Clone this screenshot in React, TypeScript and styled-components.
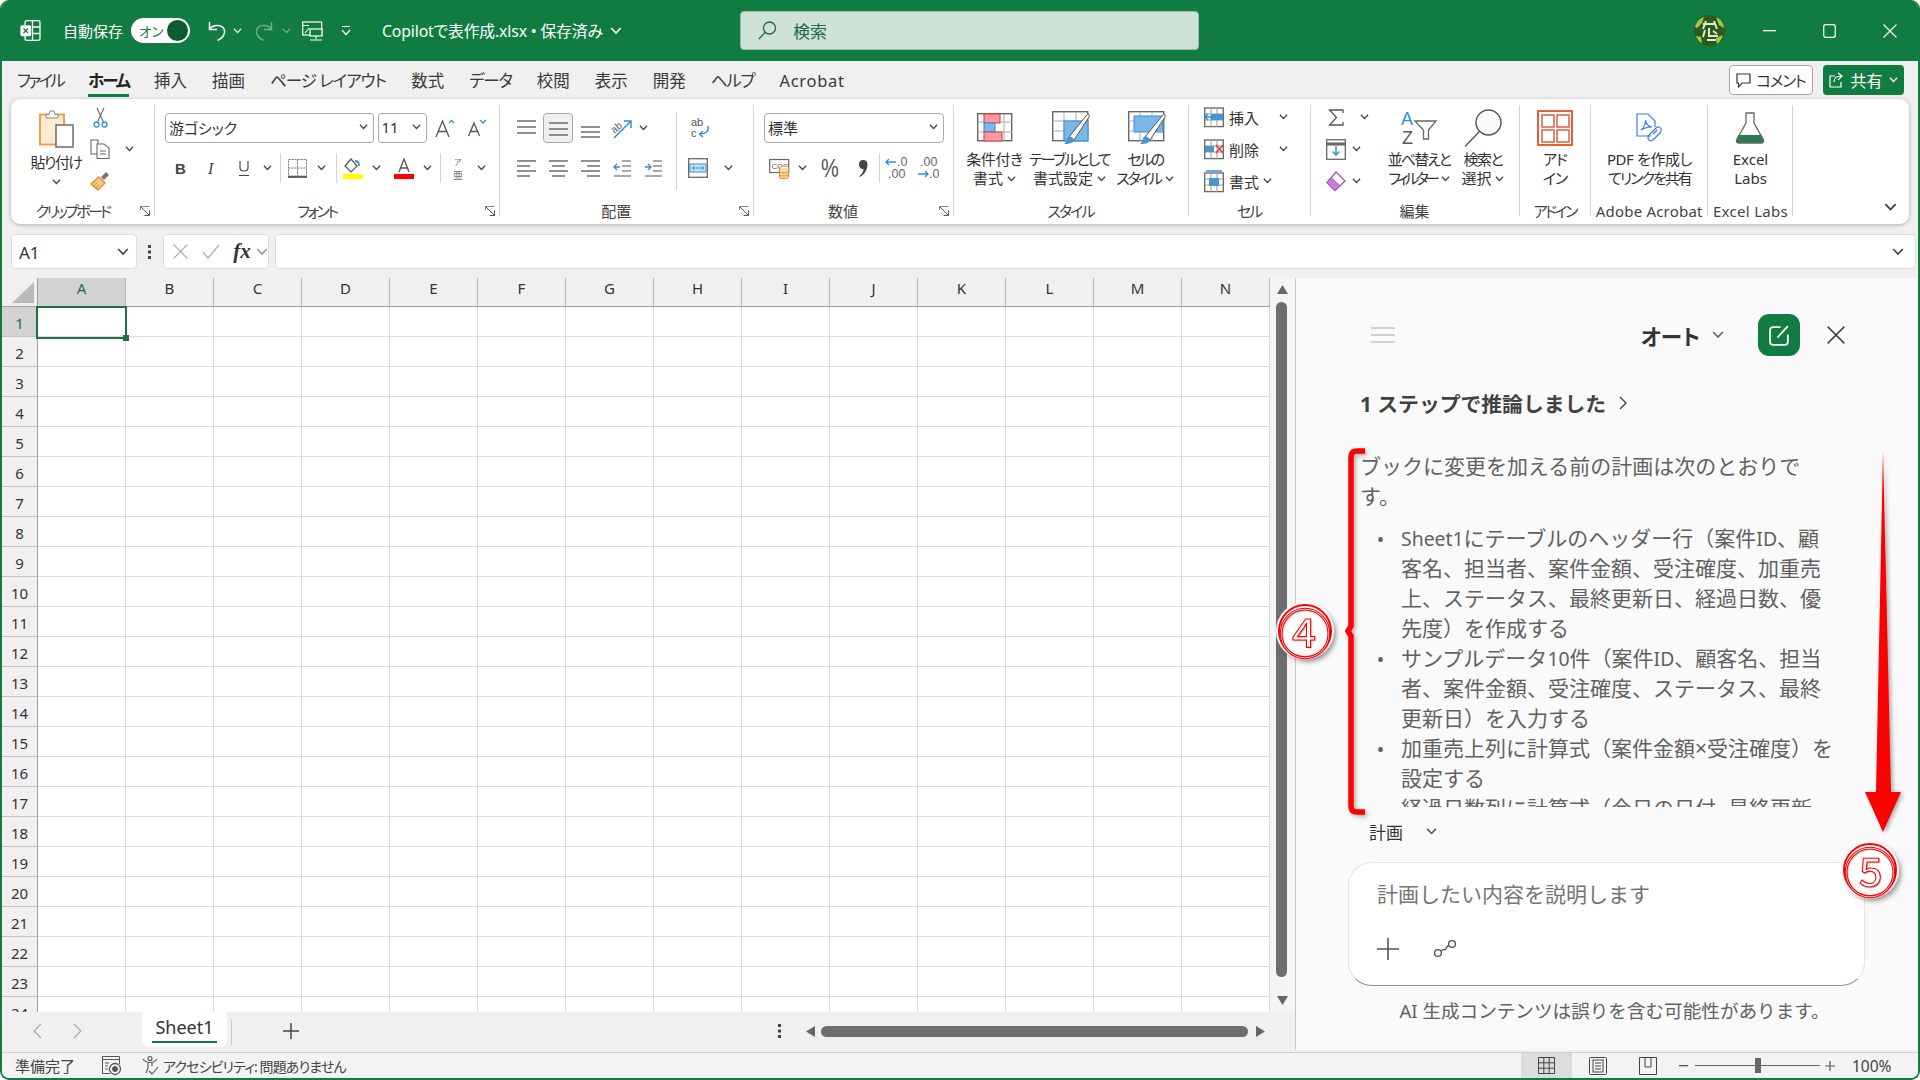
import React from 'react';
import styled, { createGlobalStyle } from 'styled-components';

const GREEN = '#107c41';
const FONT = `"Noto Sans", "Noto Sans CJK JP", sans-serif`;

const GlobalStyle = createGlobalStyle`
  html, body {
    margin: 0;
    background: #fff;
    overflow: hidden;
    font-family: ${FONT};
  }
  * { box-sizing: border-box; }
  svg { overflow: visible; }
`;

const Window = styled.div`
  position: relative;
  width: 1920px;
  height: 1080px;
  display: flex;
  flex-direction: column;
  background: #f0f0f0;
  border: 2px solid ${GREEN};
  border-top: 0;
  border-radius: 9px;
  overflow: hidden;
  color: #333;
  font-feature-settings: 'palt';
`;

/* generic width holder for an icon: icon is centred and may overflow */
const Slot = styled.span<{ $w: number; $ml?: number }>`
  flex: 0 0 ${(p) => p.$w}px;
  width: ${(p) => p.$w}px;
  margin-left: ${(p) => p.$ml ?? 0}px;
  display: flex;
  align-items: center;
  justify-content: center;
  height: 100%;
  & > * { flex-shrink: 0; }
`;

/* ---------- title bar ---------- */
const TitleBar = styled.div`
  height: 61px;
  flex: 0 0 61px;
  margin: 0 -2px;
  padding-left: 12px;
  display: flex;
  align-items: center;
  background: ${GREEN};
  color: #fff;
`;
const AutoSave = styled.span`
  margin-left: 15px;
  font-size: 15px;
  width: 60px;
  white-space: nowrap;
`;
const Toggle = styled.span`
  margin-left: 8px;
  width: 59px;
  height: 25px;
  padding: 0 2px 0 8px;
  border-radius: 13px;
  background: #fff;
  color: ${GREEN};
  font-size: 13.5px;
  display: flex;
  align-items: center;
  justify-content: space-between;
`;
const Knob = styled.span`
  width: 21px;
  height: 21px;
  border-radius: 50%;
  background: #0c5c31;
`;
const FileName = styled.span`
  width: 240px;
  margin-left: 23px;
  display: flex;
  align-items: center;
  gap: 7px;
  font-size: 15.8px;
  letter-spacing: -0.15px;
  white-space: nowrap;
`;
const SearchBox = styled.div`
  margin-left: 118px;
  width: 459px;
  height: 39px;
  padding-left: 17px;
  display: flex;
  align-items: center;
  gap: 16px;
  background: #cfe2d8;
  border: 1px solid #9fb5a9;
  border-radius: 4px;
  color: #1d6b42;
  font-size: 17px;
`;
const TitleRight = styled.div`
  margin-left: auto;
  display: flex;
  align-items: center;
  height: 100%;
`;
const Avatar = styled.span`
  width: 31px;
  height: 31px;
  margin-right: 15px;
  display: flex;
`;

/* ---------- tab row ---------- */
const TabRow = styled.div`
  height: 38px;
  flex: 0 0 38px;
  padding: 0 14px 0 15px;
  display: flex;
  align-items: center;
  gap: 25px;
  font-size: 16.5px;
`;
const Tab = styled.span<{ $active?: boolean; $ls?: number }>`
  position: relative;
  white-space: nowrap;
  letter-spacing: ${(p) => p.$ls ?? 0}px;
  font-weight: ${(p) => (p.$active ? 700 : 400)};
  color: ${(p) => (p.$active ? '#222' : '#3a3a3a')};
  &::after {
    content: '';
    display: ${(p) => (p.$active ? 'block' : 'none')};
    position: absolute;
    left: 0;
    right: 0;
    bottom: -5px;
    height: 3px;
    background: ${GREEN};
  }
`;
const TabRight = styled.div`
  margin-left: auto;
  display: flex;
  gap: 10px;
`;
const CommentButton = styled.span`
  width: 84px;
  height: 30px;
  display: flex;
  align-items: center;
  justify-content: center;
  gap: 5px;
  font-size: 15.5px;
  letter-spacing: -1.2px;
  background: #fff;
  border: 1px solid #a6a6a6;
  border-radius: 4px;
`;
const ShareButton = styled.span`
  width: 81px;
  height: 30px;
  display: flex;
  align-items: center;
  justify-content: center;
  gap: 6px;
  font-size: 16px;
  color: #fff;
  background: ${GREEN};
  border-radius: 4px;
`;

/* ---------- ribbon ---------- */
const Ribbon = styled.div`
  margin: 0 9px 10px;
  height: 125px;
  flex: 0 0 125px;
  display: flex;
  background: #fff;
  border-radius: 9px;
  box-shadow: 0 1px 4px rgba(0, 0, 0, 0.28);
`;
const Group = styled.div<{ $w: number }>`
  position: relative;
  flex: 0 0 ${(p) => p.$w}px;
  width: ${(p) => p.$w}px;
  height: 111px;
  margin-top: 6px;
  border-right: 1px solid #d4d4d4;
  display: flex;
  flex-direction: column;
`;
const GroupBody = styled.div<{ $pl?: number }>`
  flex: 0 0 94px;
  height: 94px;
  padding-left: ${(p) => p.$pl ?? 0}px;
  display: flex;
`;
const GroupLabel = styled.div<{ $ls?: number; $launcher?: boolean }>`
  flex: 0 0 24px;
  height: 24px;
  line-height: 24px;
  padding-right: ${(p) => (p.$launcher ? 20 : 0)}px;
  text-align: center;
  font-size: 15px;
  letter-spacing: ${(p) => p.$ls ?? 0}px;
  white-space: nowrap;
  color: #444;
`;
const Launcher = styled.span`
  position: absolute;
  right: 4px;
  bottom: 0;
  display: flex;
`;
const TwoRows = styled.div<{ $w?: number }>`
  ${(p) => (p.$w ? `width: ${p.$w}px;` : '')}
  padding-top: 8px;
  display: flex;
  flex-direction: column;
  gap: 10px;
`;
const ToolRow = styled.div`
  height: 30px;
  display: flex;
  align-items: center;
`;
const ThreeRows = styled.div`
  margin-top: -4px;
  display: flex;
  flex-direction: column;
`;
const SmallRow = styled.div`
  height: 32px;
  display: flex;
  align-items: center;
  font-size: 15px;
  white-space: nowrap;
`;
const PasteColumn = styled.div`
  width: 64px;
  margin-left: 13px;
  padding-top: 5px;
  display: flex;
  flex-direction: column;
  align-items: center;
  font-size: 15px;
  white-space: nowrap;
`;
const PasteText = styled.span`
  margin-top: 4px;
  line-height: 20px;
  letter-spacing: -1.5px;
`;
const PasteChevron = styled.span`
  display: flex;
  margin-top: 7px;
`;
const SelectBox = styled.span<{ $w: number; $ml?: number }>`
  flex: 0 0 ${(p) => p.$w}px;
  height: 30px;
  margin-left: ${(p) => p.$ml ?? 0}px;
  padding: 0 5px 2px 3px;
  display: flex;
  align-items: center;
  justify-content: space-between;
  font-size: 15px;
  background: #fff;
  border: 1px solid #a8a8a8;
  border-radius: 4px;
`;
const Pressed = styled.span`
  width: 30px;
  height: 30px;
  display: flex;
  align-items: center;
  justify-content: center;
  background: #f0f0f0;
  border: 1px solid #a8a8a8;
  border-radius: 4px;
`;
const ToolSep = styled.span`
  width: 1px;
  height: 30px;
  background: #d4d4d4;
`;
const InnerSep = styled.span`
  width: 1px;
  height: 78px;
  margin-top: 7px;
  background: #d4d4d4;
`;
const BigButton = styled.div<{ $w: number }>`
  flex: 0 0 ${(p) => p.$w}px;
  width: ${(p) => p.$w}px;
  display: flex;
  flex-direction: column;
  align-items: center;
  font-size: 15px;
  line-height: 19px;
  white-space: nowrap;
`;
const BigIcon = styled.span<{ $dx?: number }>`
  height: 45px;
  padding-left: ${(p) => p.$dx ?? 0}px;
  display: flex;
  align-items: center;
  justify-content: center;
`;
const BigLine = styled.span<{ $ls?: number }>`
  display: flex;
  align-items: center;
  gap: 4px;
  letter-spacing: ${(p) => p.$ls ?? 0}px;
`;
const CollapseButton = styled.span`
  margin-left: auto;
  align-self: flex-end;
  width: 38px;
  height: 34px;
  display: flex;
  align-items: center;
  justify-content: center;
`;

/* ---------- formula bar ---------- */
const FormulaBar = styled.div`
  height: 35px;
  flex: 0 0 35px;
  margin: 0 9px 9px;
  display: flex;
  align-items: stretch;
`;
const FormulaCell = styled.div<{ $w?: number }>`
  ${(p) => (p.$w ? `flex: 0 0 ${p.$w}px;` : 'flex: 1;')}
  display: flex;
  align-items: center;
  background: #fff;
  border: 1px solid #dcdcdc;
  border-radius: 4px;
  font-size: 17px;
`;
const NameText = styled.span`
  margin-left: 7px;
  padding-top: 2px;
  flex: 1;
`;
const DotsSlot = styled.span`
  flex: 0 0 26px;
  display: flex;
  align-items: center;
  justify-content: center;
`;
const FxText = styled.span`
  font: italic 700 21px 'Liberation Serif', serif;
  color: #333;
`;

/* ---------- sheet ---------- */
const Main = styled.div`
  flex: 1;
  min-height: 0;
  display: flex;
`;
const SheetPane = styled.div`
  flex: 0 0 1293px;
  display: flex;
  flex-direction: column;
`;
const GridArea = styled.div`
  flex: 1;
  min-height: 0;
  display: flex;
`;
const Grid = styled.div`
  position: relative;
  flex: 0 0 1268px;
  overflow: hidden;
  background: #fff;
  font-size: 15px;
`;
const Row = styled.div<{ $h: number }>`
  height: ${(p) => p.$h}px;
  display: flex;
`;
const Corner = styled.div`
  position: relative;
  flex: 0 0 36px;
  background: #f0f0f0;
  border-bottom: 1px solid #a0a0a0;
  border-right: 1px solid #a0a0a0;
  &::after {
    content: '';
    position: absolute;
    right: 3px;
    bottom: 3px;
    width: 22px;
    height: 21px;
    background: #b9b9b9;
    clip-path: polygon(100% 0, 100% 100%, 0 100%);
  }
`;
const ColHead = styled.div<{ $on?: boolean }>`
  flex: 0 0 88px;
  padding-bottom: 8px;
  display: flex;
  align-items: center;
  justify-content: center;
  background: ${(p) => (p.$on ? '#d2d2d2' : '#f0f0f0')};
  color: ${(p) => (p.$on ? '#1f6f43' : '#333')};
  border-right: 1px solid #b4b4b4;
  border-bottom: 1px solid #a0a0a0;
`;
const RowHead = styled.div<{ $on?: boolean }>`
  flex: 0 0 36px;
  padding-top: 2px;
  display: flex;
  align-items: center;
  justify-content: center;
  background: ${(p) => (p.$on ? '#d2d2d2' : '#f0f0f0')};
  color: ${(p) => (p.$on ? '#1f6f43' : '#333')};
  border-right: 1px solid #a0a0a0;
  border-bottom: 1px solid #c4c4c4;
`;
const Cell = styled.div`
  flex: 0 0 88px;
  border-right: 1px solid #dcdcdc;
  border-bottom: 1px solid #dcdcdc;
`;
const Selection = styled.div`
  position: absolute;
  left: 34px;
  top: 28px;
  width: 91px;
  height: 33px;
  border: 2.5px solid #1f7145;
  &::after {
    content: '';
    position: absolute;
    right: -4px;
    bottom: -4px;
    width: 6px;
    height: 6px;
    background: #1f7145;
  }
`;
const VScroll = styled.div`
  flex: 1;
  padding: 7px 0 5px;
  display: flex;
  flex-direction: column;
  align-items: center;
  background: #f4f4f4;
`;
const VThumb = styled.div`
  width: 11px;
  flex: 1;
  margin: 6px 3px 19px 0;
  border-radius: 6px;
  background: #6d6d6d;
`;
const SheetBar = styled.div`
  height: 40px;
  flex: 0 0 40px;
  display: flex;
  align-items: flex-start;
  background: #f0f0f0;
`;
const SheetTab = styled.div`
  position: relative;
  width: 85px;
  height: 35px;
  padding-bottom: 5px;
  display: flex;
  align-items: center;
  justify-content: center;
  background: #fff;
  border-radius: 0 0 7px 7px;
  font-size: 18px;
  &::after {
    content: '';
    position: absolute;
    left: 10px;
    right: 10px;
    bottom: 4px;
    height: 2px;
    background: ${GREEN};
  }
`;
const NavSlots = styled.div`
  height: 38px;
  display: flex;
  align-items: center;
`;
const TabDivider = styled.span`
  width: 1px;
  height: 26px;
  margin: 7px 0 0 4px;
  background: #c8c8c8;
`;
const HScroll = styled.div`
  margin: 0 21px 0 auto;
  height: 38px;
  display: flex;
  align-items: center;
`;
const HThumb = styled.div`
  width: 427px;
  height: 11px;
  border-radius: 6px;
  background: #6d6d6d;
`;

/* ---------- copilot panel ---------- */
const Panel = styled.div`
  flex: 1;
  height: 772px;
  background: #fafafa;
  border-left: 1px solid #c8c8c8;
  padding-top: 36px;
  display: flex;
  flex-direction: column;
`;
const PanelHead = styled.div`
  height: 42px;
  padding: 0 64px 0 75px;
  display: flex;
  align-items: center;
`;
const ModeLabel = styled.span`
  margin-left: auto;
  font-size: 21.5px;
  font-weight: 700;
  color: #333;
`;
const NewChat = styled.span`
  width: 42px;
  height: 42px;
  margin: 0 0 0 22px;
  border-radius: 11px;
  background: ${GREEN};
  display: flex;
  align-items: center;
  justify-content: center;
`;
const ReasonLine = styled.div`
  margin: 32px 0 33px 64px;
  height: 30px;
  display: flex;
  align-items: center;
  gap: 13px;
  font-size: 20.8px;
  font-weight: 700;
  color: #424242;
  font-feature-settings: normal;
`;
const PlanBody = styled.div`
  margin-left: 64px;
  height: 356px;
  overflow: hidden;
  font-size: 21px;
  line-height: 30px;
  color: #616161;
  white-space: nowrap;
  font-feature-settings: normal;
`;
const Latin = styled.span`
  font-size: 19.4px;
  line-height: 1;
`;
const PlanList = styled.ul`
  margin: 12px 0 0;
  padding: 0;
  list-style: none;
`;
const PlanItem = styled.li`
  display: flex;
`;
const PlanMark = styled.span`
  flex: 0 0 41px;
  padding-top: 2px;
  text-align: center;
  font-size: 20px;
`;
const PlanChip = styled.div`
  margin: 9px 0 16px 73px;
  height: 30px;
  display: flex;
  align-items: center;
  gap: 23px;
  font-size: 17px;
  color: #333;
  font-feature-settings: normal;
`;
const InputBox = styled.div`
  margin-left: 52px;
  width: 517px;
  height: 124px;
  padding: 16px 0 0 28px;
  display: flex;
  flex-direction: column;
  background: #fff;
  border: 1px solid #e4e4e4;
  border-bottom-color: #8f8f8f;
  border-radius: 24px;
  font-feature-settings: normal;
`;
const Placeholder = styled.div`
  height: 30px;
  line-height: 30px;
  font-size: 21px;
  color: #757575;
`;
const InputTools = styled.div`
  margin-top: 25px;
  height: 30px;
  display: flex;
  align-items: center;
  gap: 34px;
`;
const Disclaimer = styled.div`
  margin: 10px 0 0 0;
  padding-left: 15px;
  height: 30px;
  line-height: 30px;
  text-align: center;
  font-size: 18.6px;
  color: #616161;
  font-feature-settings: normal;
`;

/* ---------- status bar ---------- */
const StatusBar = styled.div`
  height: 26px;
  flex: 0 0 26px;
  display: flex;
  align-items: center;
  background: #f3f3f3;
  border-top: 1px solid #cfcfcf;
  font-size: 15px;
  color: #444;
`;
const StatusText = styled.span<{ $ml: number; $size?: number; $ls?: number }>`
  margin-left: ${(p) => p.$ml}px;
  font-size: ${(p) => p.$size ?? 15}px;
  letter-spacing: ${(p) => p.$ls ?? 0}px;
  white-space: nowrap;
`;
const StatusRight = styled.div`
  margin-left: auto;
  height: 100%;
  display: flex;
  align-items: center;
`;
const ViewButton = styled.span<{ $on?: boolean; $w: number }>`
  flex: 0 0 ${(p) => p.$w}px;
  height: 100%;
  display: flex;
  align-items: center;
  justify-content: center;
  background: ${(p) => (p.$on ? '#dcdcdc' : 'transparent')};
`;
const ZoomTrack = styled.span`
  position: relative;
  flex: 0 0 125px;
  height: 1px;
  margin: 0 5px 0 5.5px;
  background: #666;
`;
const ZoomThumb = styled.span`
  position: absolute;
  left: 60px;
  top: -7px;
  width: 6px;
  height: 15px;
  background: #666;
`;
const ZoomPct = styled.span`
  width: 41px;
  margin: 0 25px 0 17px;
  font-size: 15.5px;
  white-space: nowrap;
`;

/* ---------- red annotations drawn over the page ---------- */
const Mark = styled.div<{ $x: number; $y: number }>`
  position: absolute;
  left: ${(p) => p.$x}px;
  top: ${(p) => p.$y}px;
  display: flex;
`;
const CircledDigit = styled.span`
  width: 54px;
  height: 54px;
  display: flex;
  align-items: center;
  justify-content: center;
  border: 2px solid #f00;
  border-radius: 50%;
  background: #fff;
  box-shadow: 0 0 0 2px #fff, 3px 3px 5px 1px rgba(0, 0, 0, 0.4);
  font: 400 53px 'Noto Sans CJK JP', sans-serif;
  line-height: 50px;
  color: #fff;
  -webkit-text-stroke: 1.1px #f00;
  text-shadow: 1px 1px 2px rgba(0, 0, 0, 0.35);
`;

/* ---------- icons ---------- */
const BLUE = '#2f8fd8';
const ORANGE = '#e58a24';

const Chev = ({ c = '#444', w = 9 }: { c?: string; w?: number }) => (
  <svg width={w} height={w * 0.6} viewBox="0 0 10 6" fill="none">
    <path d="M1 .8 5 5 9 .8" stroke={c} strokeWidth="1.4" />
  </svg>
);
const LaunchIcon = () => (
  <svg width="10" height="10" viewBox="0 0 10 10" fill="none" stroke="#555">
    <path d="M.5 4V.5H9.5" stroke="#888" />
    <path d="M.5.5 9 9M4.5 9.5H9.5V4.5" />
  </svg>
);
const ExcelLogo = () => (
  <svg width="21" height="21" viewBox="0 0 21 21" fill="none" stroke="#fff" strokeWidth="1.3">
    <rect x="5" y=".7" width="15" height="19.6" rx="2" />
    <path d="M12.5 1V20M12.5 7H20M12.5 13.5H20" />
    <rect x="1" y="6" width="9.5" height="9.5" rx="1" fill="#fff" />
    <path d="M3.5 8.5 8 13M8 8.5 3.5 13" stroke={GREEN} />
  </svg>
);
const Undo = ({ flip, c }: { flip?: boolean; c: string }) => (
  <svg width="20" height="20" viewBox="0 0 20 20" fill="none" stroke={c} strokeWidth="1.5" style={flip ? { transform: 'scaleX(-1)' } : undefined}>
    <path d="M2.5 1V8.5H10M2.5 8.5C6 3 16 3 17.5 9.5 18.5 13.5 15 17.5 10.5 19.5" />
  </svg>
);
const ScreenIcon = () => (
  <svg width="21" height="21" viewBox="0 0 21 21" fill="none" stroke="#fff" strokeWidth="1.2">
    <rect x=".7" y="2" width="19" height="13" />
    <path d="M.7 5.5H7M14 15v4M8 20H20" />
    <rect x="8" y="9" width="12" height="7" fill={GREEN} />
    <path d="M3 13 7 8" />
  </svg>
);
const CustomizeIcon = () => (
  <svg width="10" height="11" viewBox="0 0 10 11" fill="none" stroke="#fff" strokeWidth="1.2">
    <path d="M1 1.5H9M1 5 5 9.5 9 5" />
  </svg>
);
const SearchIcon = () => (
  <svg width="19" height="19" viewBox="0 0 19 19" fill="none" stroke="#1d6b42" strokeWidth="1.3">
    <circle cx="11.5" cy="7" r="6" />
    <path d="M7 11.5 1 18" />
  </svg>
);
const AvatarIcon = () => (
  <svg width="31" height="31" viewBox="0 0 31 31">
    <circle cx="15.5" cy="15.5" r="15.5" fill="#2c5a1c" />
    <path d="M1 12C3 5 7 3 10 2L8 8 3 13ZM22 2c5 2 8 7 8 11l-5-3ZM2 21l5 1 1 6C5 27 3 24 2 21ZM29 20c-1 4-3 7-6 9l-1-6Z" fill="#a3cc3a" />
    <path d="M9 9h12M12 6l-3 8M20 6l3 8M11 15l-2 7M15 13v8h9M19 16l4 3M13 25h9" stroke="#dfeccb" strokeWidth="2" fill="none" />
  </svg>
);
const MinIcon = () => (
  <svg width="13" height="2"><rect width="13" height="1.3" fill="#fff" /></svg>
);
const MaxIcon = () => (
  <svg width="13" height="14" viewBox="0 0 13 14" fill="none" stroke="#fff" strokeWidth="1.3"><rect x=".7" y=".7" width="11.6" height="12.6" rx="2" /></svg>
);
const CloseIcon = ({ c = '#fff', s = 14 }: { c?: string; s?: number }) => (
  <svg width={s} height={s} viewBox="0 0 14 14" fill="none" stroke={c} strokeWidth="1.2"><path d="M.5.5 13.5 13.5M13.5.5.5 13.5" /></svg>
);
const CommentIcon = () => (
  <svg width="15" height="15" viewBox="0 0 15 15" fill="none" stroke="#333" strokeWidth="1.2"><path d="M1 1H14V10H6L2.5 14V10H1Z" /></svg>
);
const ShareIcon = () => (
  <svg width="15" height="16" viewBox="0 0 15 16" fill="none" stroke="#fff" strokeWidth="1.2"><path d="M6 4H1V15H12V10M5 10C5 6 8 4 12 4M9 1 13 4 9 8" /></svg>
);
const PasteIcon = () => (
  <svg width="35" height="38" viewBox="0 0 35 38">
    <rect x="1" y="4.5" width="24" height="30" fill="#fdebd0" stroke="#eaa14a" strokeWidth="2" />
    <path d="M7 8V4.5H10L11 1H15L16 4.5H19V8Z" fill="#f4f4f4" stroke="#8a8a8a" />
    <rect x="17" y="15" width="17" height="22" fill="#fff" stroke="#6b6b6b" strokeWidth="1.5" />
  </svg>
);
const ScissorsIcon = () => (
  <svg width="15" height="21" viewBox="0 0 15 21" fill="none">
    <path d="M4 1 10.5 15M11 1 4.5 15" stroke="#666" strokeWidth="1.1" />
    <circle cx="3.5" cy="17.5" r="2.5" stroke={BLUE} strokeWidth="1.3" />
    <circle cx="11.5" cy="17.5" r="2.5" stroke={BLUE} strokeWidth="1.3" />
  </svg>
);
const CopyIcon = () => (
  <svg width="20" height="20" viewBox="0 0 20 20" fill="#fff" stroke="#666" strokeWidth="1.1">
    <path d="M1 1H8V15H1Z" />
    <path d="M7 5H14L19 9V19.5H7Z" />
    <path d="M10 12H16M10 15H16" />
  </svg>
);
const BrushIcon = () => (
  <svg width="20" height="20" viewBox="0 0 20 20" fill="none">
    <path d="M1 13 9 6 15 12 8 19Z" fill="#f3c68a" stroke={ORANGE} strokeWidth="1.3" />
    <path d="M4 15 7 12M6 17 9 14" stroke={ORANGE} />
    <path d="M11 6 16 1 19 4 14 9Z" fill="#777" />
  </svg>
);
const FontGrow = ({ down }: { down?: boolean }) => (
  <svg width="20" height="20" viewBox="0 0 20 20" fill="none">
    <path d={down ? 'M1.5 18 7 5 12.5 18M3.5 13.5H10.5' : 'M1 19 7.5 3 14 19M3.5 13.5H11.5'} stroke="#555" strokeWidth="1.3" />
    <path d={down ? 'M13 2 16 5 19 2' : 'M14 5 16.5 2.5 19 5'} stroke={BLUE} strokeWidth="1.3" />
  </svg>
);
const GlyphB = () => (
  <svg width="12" height="20" viewBox="0 0 12 20"><text x="1" y="16" fontFamily="Liberation Sans" fontWeight="700" fontSize="15" fill="#444">B</text></svg>
);
const GlyphI = () => (
  <svg width="10" height="20" viewBox="0 0 10 20"><text x="2" y="16" fontFamily="Liberation Serif" fontStyle="italic" fontSize="16" fill="#444">I</text></svg>
);
const GlyphU = () => (
  <svg width="12" height="17" viewBox="0 0 12 17" fill="none" stroke="#444" strokeWidth="1.2"><path d="M2 1V8C2 12 10 12 10 8V1M1 15.5H11" /></svg>
);
const BorderIcon = () => (
  <svg width="19" height="19" viewBox="0 0 19 19" fill="none" stroke="#777" strokeDasharray="2 1">
    <path d="M.5.5H18.5V17H.5ZM9.5.5V17M.5 9H18.5" />
    <path d="M0 18H19" stroke="#333" strokeWidth="1.5" strokeDasharray="none" />
  </svg>
);
const FillIcon = () => (
  <svg width="20" height="21" viewBox="0 0 20 21" fill="none">
    <path d="M8 1 14 8 8 14 2 8Z" stroke="#555" strokeWidth="1.2" />
    <path d="M12 3C15 3 16 5 16 8" stroke={BLUE} strokeWidth="1.8" />
    <rect x="0" y="16" width="20" height="5" fill="#ffff00" />
  </svg>
);
const FontColorIcon = () => (
  <svg width="20" height="21" viewBox="0 0 20 21" fill="none">
    <path d="M5 14 10 1 15 14M6.5 10H13.5" stroke="#555" strokeWidth="1.3" />
    <rect x="0" y="16" width="20" height="5" fill="#ff0000" />
  </svg>
);
const PhoneticIcon = () => (
  <svg width="12" height="23" viewBox="0 0 12 23">
    <text x="2" y="8" fontSize="8" fill="#777" fontFamily="Noto Sans CJK JP">ア</text>
    <text x="1" y="22" fontSize="10" fill="#777" fontFamily="Noto Sans CJK JP">亜</text>
  </svg>
);
const Lines = ({ rows }: { rows: number[][] }) => (
  <svg width="19" height="19" viewBox="0 0 19 19" stroke="#555" strokeWidth="1.3" fill="none">
    {rows.map(([y, a, b]) => (
      <path key={`${y}-${a}`} d={`M${a} ${y}H${b}`} />
    ))}
  </svg>
);
const OrientIcon = () => (
  <svg width="22" height="22" viewBox="0 0 22 22" fill="none">
    <text x="0" y="12" fontSize="10" fill="#555" fontFamily="Liberation Sans" transform="rotate(-40 8 10)">ab</text>
    <path d="M3 21 19 5M13 4H20V11" stroke={BLUE} strokeWidth="1.5" />
  </svg>
);
const IndentIcon = ({ out }: { out?: boolean }) => (
  <svg width="19" height="19" viewBox="0 0 19 19" fill="none">
    <path d="M9 3H18M9 8H18M9 13H18M1 18H18" stroke="#555" strokeWidth="1.2" transform="translate(0 -1)" />
    <path d={out ? 'M7 8H1M4 5 1 8 4 11' : 'M1 8H7M4 5 7 8 4 11'} stroke={BLUE} strokeWidth="1.4" />
  </svg>
);
const WrapIcon = () => (
  <svg width="19" height="22" viewBox="0 0 19 22" fill="none">
    <text x="0" y="9" fontSize="11" fill="#555" fontFamily="Liberation Sans">ab</text>
    <text x="0" y="20" fontSize="11" fill="#555" fontFamily="Liberation Sans">c</text>
    <path d="M17 9C18 14 15 17 9 17M12 14 8.5 17 12 20" stroke={BLUE} strokeWidth="1.4" />
  </svg>
);
const MergeIcon = () => (
  <svg width="20" height="20" viewBox="0 0 20 20" fill="none">
    <rect x=".7" y=".7" width="18.6" height="18.6" stroke="#666" strokeWidth="1.3" />
    <rect x="2" y="6" width="16" height="8" fill="#cfe6f7" stroke={BLUE} />
    <path d="M4 10H16M6.5 8 4 10 6.5 12M13.5 8 16 10 13.5 12" stroke={BLUE} />
  </svg>
);
const AccountingIcon = () => (
  <svg width="21" height="21" viewBox="0 0 21 21" fill="none">
    <rect x=".7" y="1.5" width="19" height="13" stroke="#666" strokeWidth="1.2" />
    <text x="2.5" y="11" fontSize="8" fill="#666" fontFamily="Liberation Sans">CCC</text>
    <ellipse cx="15" cy="10" rx="4.5" ry="2" fill="#fff" stroke={ORANGE} />
    <path d="M10.5 10V19C10.5 21.5 19.5 21.5 19.5 19V10M10.5 13.5C11 15.5 19 15.5 19.5 13.5M10.5 16.5C11 18.5 19 18.5 19.5 16.5" fill="#fbd9ae" stroke={ORANGE} />
  </svg>
);
const PercentIcon = () => (
  <svg width="20" height="20" viewBox="0 0 20 20"><text x="0" y="0" fontSize="25" fontFamily="Liberation Sans" fill="#555" transform="translate(1 19) scale(.8 1)">%</text></svg>
);
const CommaIcon = () => (
  <svg width="10" height="20" viewBox="0 0 10 20"><path d="M5 2C8 2 9.5 4 9.5 6.5 9.5 12 6 17 2 19L1.5 18C4 16 5.5 13.5 5.5 11 3 11.5 1 9.5 1 6.5 1 4 2.5 2 5 2Z" fill="#444" /></svg>
);
const DecimalIcon = ({ more }: { more?: boolean }) => (
  <svg width="22" height="24" viewBox="0 0 22 24" fill="none">
    <text x={more ? 12 : 3} y="10" fontSize="12.5" fill="#666" fontFamily="Liberation Sans">{more ? '.0' : '.00'}</text>
    <text x={more ? 3 : 12} y="22" fontSize="12.5" fill="#666" fontFamily="Liberation Sans">{more ? '.00' : '.0'}</text>
    <path d={more ? 'M11 6H1M4 3 1 6 4 9' : 'M1 18H11M8 15 11 18 8 21'} stroke={BLUE} strokeWidth="1.3" />
  </svg>
);
const CondFormatIcon = () => (
  <svg width="36" height="29" viewBox="0 0 36 29" fill="none">
    <rect x=".7" y=".7" width="34" height="27" fill="#fff" stroke="#666" strokeWidth="1.4" />
    <path d="M8 1V28M27 1V28M.7 9H35M.7 19H35" stroke="#aaa" />
    <rect x="7" y="1" width="16" height="9" fill="#ff9aa2" stroke="#d9363e" />
    <rect x="7" y="10" width="11" height="9" fill="#7db7e8" stroke={BLUE} />
    <rect x="7" y="19" width="18" height="9" fill="#ff9aa2" stroke="#d9363e" />
  </svg>
);
const TableBrushIcon = ({ solid }: { solid?: boolean }) => (
  <svg width="39" height="34" viewBox="0 0 39 34" fill="none">
    <rect x=".7" y=".7" width="35" height="29" fill="#fff" stroke="#666" strokeWidth="1.4" />
    <path d="M12 1V30M24 1V30M.7 10H36M.7 20H36" stroke="#aaa" />
    {solid ? (
      <rect x="6" y="5" width="29" height="16" fill="#7db7e8" stroke={BLUE} />
    ) : (
      <rect x="12" y="10" width="24" height="20" fill="#7db7e8" stroke={BLUE} />
    )}
    <path d="M17 26 34 5C36 2 38 3 37 6L22 29Z" fill="#fff" stroke="#555" />
    <path d="M12 33C15 33 21 33 22 29 21 26 17 24 16 26 14 28 15 31 12 33Z" fill="#4a94cf" />
  </svg>
);
const InsertIcon = () => (
  <svg width="20" height="21" viewBox="0 0 20 21" fill="none">
    <rect x=".7" y="1" width="18.6" height="18.6" stroke="#666" strokeWidth="1.3" />
    <path d="M7 1V20M13 1V20M1 7H19M1 13H19" stroke="#999" />
    <rect x="7" y="7" width="12" height="6" fill="#4a94cf" />
    <path d="M9 10H1M4 7 1 10 4 13" stroke={BLUE} strokeWidth="1.5" />
  </svg>
);
const DeleteIcon = () => (
  <svg width="20" height="21" viewBox="0 0 20 21" fill="none">
    <rect x=".7" y="1" width="18.6" height="18.6" stroke="#666" strokeWidth="1.3" />
    <path d="M7 1V20M13 1V20M1 7H19M1 13H19" stroke="#999" />
    <rect x="1" y="7" width="9" height="6" fill="#4a94cf" />
    <path d="M12 6 19 14M19 6 12 14" stroke="#e03c3c" strokeWidth="1.5" />
  </svg>
);
const FormatIcon = () => (
  <svg width="20" height="22" viewBox="0 0 20 22" fill="none">
    <rect x=".7" y="3" width="18.6" height="18.6" stroke="#666" strokeWidth="1.3" />
    <path d="M7 3V22M13 3V22M1 9H19M1 15H19" stroke="#999" />
    <rect x="5" y="8" width="10" height="8" fill="#4a94cf" />
    <path d="M2 1H18" stroke={BLUE} strokeWidth="1.5" />
  </svg>
);
const SumIcon = () => (
  <svg width="16" height="17" viewBox="0 0 16 17" fill="none" stroke="#555" strokeWidth="1.3"><path d="M15 4V1H1.5L8.5 8.5 1.5 16H15V13" /></svg>
);
const FillDownIcon = () => (
  <svg width="20" height="21" viewBox="0 0 20 21" fill="none">
    <rect x=".7" y=".7" width="18.6" height="19.6" stroke="#666" strokeWidth="1.3" />
    <path d="M1 5H19" stroke="#666" strokeWidth="3" />
    <path d="M10 7V16M6.5 12.5 10 16 13.5 12.5" stroke={BLUE} strokeWidth="1.5" />
  </svg>
);
const EraserIcon = () => (
  <svg width="20" height="20" viewBox="0 0 20 20" fill="none">
    <path d="M10 1 19 10 9 19.5 1 11.5Z" fill="#fff" stroke="#a94fbf" strokeWidth="1.3" />
    <path d="M5.5 7 14 15 9 19.5 1 11.5Z" fill="#c77fd8" stroke="#a94fbf" />
  </svg>
);
const SortIcon = () => (
  <svg width="37" height="34" viewBox="0 0 37 34" fill="none">
    <text x="1" y="14" fontSize="18" fill={BLUE} fontFamily="Liberation Sans">A</text>
    <text x="2" y="33" fontSize="18" fill="#555" fontFamily="Liberation Sans">Z</text>
    <path d="M15 10H36L28.5 19V28H23.5V19Z" fill="#fff" stroke="#666" strokeWidth="1.3" />
  </svg>
);
const FindIcon = () => (
  <svg width="38" height="38" viewBox="0 0 38 38" fill="none" stroke="#555" strokeWidth="1.4">
    <circle cx="24.5" cy="13.5" r="12.5" fill="#fafafa" />
    <path d="M15.5 22.5 1 37.5" />
  </svg>
);
const AddinIcon = () => (
  <svg width="36" height="36" viewBox="0 0 36 36" fill="none" stroke="#e0603a" strokeWidth="1.5">
    <rect x="1" y="1" width="34" height="34" strokeWidth="2" />
    <rect x="5" y="5" width="12" height="12" />
    <rect x="20" y="5" width="12" height="12" />
    <rect x="5" y="20" width="12" height="12" />
    <rect x="20" y="20" width="12" height="12" />
  </svg>
);
const PdfLinkIcon = () => (
  <svg width="27" height="29" viewBox="0 0 27 29" fill="none" stroke="#3a7fe0" strokeWidth="1.2">
    <path d="M15 23H1V1H12L19 8V14" />
    <path d="M5 17C8 15 10 10 9.5 7 10 11 13 14 16 14 12 14 8 15 5 17Z" />
    <path d="M13 27C11 25 12 23 14 21L20 15C22 13 25 14 25 16 26 18 24 20 22 22L18 26C16 28 14 28 13 27ZM17 21 21 17" />
  </svg>
);
const FlaskIcon = () => (
  <svg width="30" height="32" viewBox="0 0 30 32" fill="none">
    <path d="M3.5 23H26.5L28.5 28C29 30 28 31 26 31H4C2 31 1 30 1.5 28Z" fill="#2c7a50" />
    <path d="M11 1V11L1.5 28C1 30 2 31 4 31H26C28 31 29 30 28.5 28L19 11V1ZM11 1H19" stroke="#666" strokeWidth="1.3" />
  </svg>
);
const Dots = () => (
  <svg width="4" height="14" viewBox="0 0 4 14" fill="#444"><rect y="0" width="3" height="3" /><rect y="5.5" width="3" height="3" /><rect y="11" width="3" height="3" /></svg>
);
const Tri = ({ d, c = '#666' }: { d: 'u' | 'd' | 'l' | 'r'; c?: string }) => {
  const p = { u: 'M0 9H11L5.5 0Z', d: 'M0 0H11L5.5 9Z', l: 'M9 0V11L0 5.5Z', r: 'M0 0V11L9 5.5Z' }[d];
  return <svg width="11" height="11" viewBox="0 0 11 11"><path d={p} fill={c} /></svg>;
};
const Nav = ({ right }: { right?: boolean }) => (
  <svg width="9" height="16" viewBox="0 0 9 16" fill="none" stroke="#aaa" strokeWidth="1.2"><path d={right ? 'M1 1 8 8 1 15' : 'M8 1 1 8 8 15'} /></svg>
);
const Plus = ({ s = 16, c = '#444', w = 1.5 }: { s?: number; c?: string; w?: number }) => (
  <svg width={s} height={s} viewBox={`0 0 ${s} ${s}`} fill="none" stroke={c} strokeWidth={w}><path d={`M${s / 2} 0V${s}M0 ${s / 2}H${s}`} /></svg>
);
const MacroIcon = () => (
  <svg width="19" height="19" viewBox="0 0 19 19" fill="none" stroke="#555">
    <path d="M.5.5H17.5M.5 3.5H17.5M.5.5V17.5H8M17.5.5V8M3 7H7M3 10H6M3 13H6" />
    <circle cx="13" cy="13" r="5.5" fill="#f3f3f3" strokeWidth="1.3" />
    <circle cx="13" cy="13" r="2.5" fill="#555" />
  </svg>
);
const AccessIcon = () => (
  <svg width="17" height="19" viewBox="0 0 17 19" fill="none" stroke="#555" strokeWidth="1.1">
    <circle cx="8" cy="2.5" r="2" />
    <path d="M1 3C3 6 6 6.5 8 6.5S13 6 15 3M6 7V12L4 17M10 7V10M7 15 10 18 16 11" />
  </svg>
);
const NormalViewIcon = () => (
  <svg width="17" height="17" viewBox="0 0 17 17" fill="none" stroke="#444"><path d="M.5.5H16.5V16.5H.5ZM5.8.5V16.5M11.2.5V16.5M.5 5.8H16.5M.5 11.2H16.5" /></svg>
);
const PageViewIcon = () => (
  <svg width="18" height="18" viewBox="0 0 18 18" fill="none" stroke="#444"><rect x=".5" y=".5" width="17" height="17" rx="1" /><rect x="4" y="3" width="10" height="12" /><path d="M6 6H12M6 9H12M6 12H12" /></svg>
);
const BreakViewIcon = () => (
  <svg width="18" height="18" viewBox="0 0 18 18" fill="none" stroke="#444"><path d="M.5.5V17.5H17.5V.5ZM6 .5V10H12V.5" /></svg>
);
const BurgerIcon = () => (
  <svg width="24" height="16" viewBox="0 0 24 16" stroke="#c4c4c4" strokeWidth="1.3"><path d="M0 1H24M0 8H24M0 15H24" /></svg>
);
const ComposeIcon = () => (
  <svg width="23" height="23" viewBox="0 0 22 22" fill="none" stroke="#fff" strokeWidth="1.7">
    <path d="M12 3H5C3 3 2 4 2 6V17C2 19 3 20 5 20H16C18 20 19 19 19 17V10" />
    <path d="M9 13 19 2" />
  </svg>
);
const LinkIcon = () => (
  <svg width="24" height="20" viewBox="0 0 24 20" fill="none" stroke="#555" strokeWidth="1.4">
    <circle cx="5" cy="14" r="3.4" />
    <circle cx="19" cy="5" r="3.4" />
    <path d="M8 12C11 9 11 12 13 10 14 8 14 7 16 6" />
  </svg>
);

/* ---------- page ---------- */
const tabs: { label: string; ls?: number }[] = [
  { label: 'ファイル', ls: -2.8 },
  { label: 'ホーム', ls: -2 },
  { label: '挿入' },
  { label: '描画' },
  { label: 'ページ レイアウト', ls: -1 },
  { label: '数式' },
  { label: 'データ', ls: -1.2 },
  { label: '校閲' },
  { label: '表示' },
  { label: '開発' },
  { label: 'ヘルプ', ls: -1.2 },
  { label: 'Acrobat', ls: 0.7 },
];
const columns = 'ABCDEFGHIJKLMN'.split('');
const rows = Array.from({ length: 24 }, (_, i) => i + 1);

const App: React.FC = () => (
  <>
    <GlobalStyle />
    <Window>
      <TitleBar>
        <Slot $w={36}><ExcelLogo /></Slot>
        <AutoSave>自動保存</AutoSave>
        <Toggle>オン<Knob /></Toggle>
        <Slot $w={21} $ml={16}><Undo c="#fff" /></Slot>
        <Slot $w={20}><Chev c="#d5e6dc" /></Slot>
        <Slot $w={34}><Undo flip c="#6fb08c" /></Slot>
        <Slot $w={10}><Chev c="#6fb08c" /></Slot>
        <Slot $w={42}><ScreenIcon /></Slot>
        <Slot $w={26}><CustomizeIcon /></Slot>
        <FileName>Copilotで表作成.xlsx • 保存済み<Chev c="#fff" w={12} /></FileName>
        <SearchBox><SearchIcon />検索</SearchBox>
        <TitleRight>
          <Avatar><AvatarIcon /></Avatar>
          <Slot $w={58}><MinIcon /></Slot>
          <Slot $w={62}><MaxIcon /></Slot>
          <Slot $w={60}><CloseIcon /></Slot>
        </TitleRight>
      </TitleBar>

      <TabRow>
        {tabs.map((t) => (
          <Tab key={t.label} $active={t.label === 'ホーム'} $ls={t.ls}>{t.label}</Tab>
        ))}
        <TabRight>
          <CommentButton><CommentIcon />コメント</CommentButton>
          <ShareButton><ShareIcon />共有<Chev c="#fff" /></ShareButton>
        </TabRight>
      </TabRow>

      <Ribbon>
        <Group $w={144}>
          <GroupBody>
            <PasteColumn>
              <PasteIcon />
              <PasteText>貼り付け</PasteText>
              <PasteChevron><Chev /></PasteChevron>
            </PasteColumn>
            <ThreeRows>
              <SmallRow><Slot $w={24}><ScissorsIcon /></Slot></SmallRow>
              <SmallRow><Slot $w={24}><CopyIcon /></Slot><Slot $w={34}><Chev /></Slot></SmallRow>
              <SmallRow><Slot $w={24}><BrushIcon /></Slot></SmallRow>
            </ThreeRows>
          </GroupBody>
          <GroupLabel $launcher $ls={-2.7}>クリップボード</GroupLabel>
          <Launcher><LaunchIcon /></Launcher>
        </Group>

        <Group $w={345}>
          <GroupBody $pl={10}>
            <TwoRows>
              <ToolRow>
                <SelectBox $w={209}>游ゴシック<Chev /></SelectBox>
                <SelectBox $w={49} $ml={3.5}>11<Chev /></SelectBox>
                <Slot $w={37}><FontGrow /></Slot>
                <Slot $w={27}><FontGrow down /></Slot>
              </ToolRow>
              <ToolRow>
                <Slot $w={30}><GlyphB /></Slot>
                <Slot $w={32}><GlyphI /></Slot>
                <Slot $w={34}><GlyphU /></Slot>
                <Slot $w={12}><Chev /></Slot>
                <Slot $w={14}><ToolSep /></Slot>
                <Slot $w={20}><BorderIcon /></Slot>
                <Slot $w={28}><Chev /></Slot>
                <Slot $w={2}><ToolSep /></Slot>
                <Slot $w={32}><FillIcon /></Slot>
                <Slot $w={15}><Chev /></Slot>
                <Slot $w={40}><FontColorIcon /></Slot>
                <Slot $w={6}><Chev /></Slot>
                <Slot $w={21}><ToolSep /></Slot>
                <Slot $w={14}><PhoneticIcon /></Slot>
                <Slot $w={32}><Chev /></Slot>
              </ToolRow>
            </TwoRows>
          </GroupBody>
          <GroupLabel $launcher $ls={-2.5}>フォント</GroupLabel>
          <Launcher><LaunchIcon /></Launcher>
        </Group>

        <Group $w={253.5}>
          <GroupBody $pl={10}>
            <TwoRows $w={166}>
              <ToolRow>
                <Slot $w={32}><Lines rows={[[2, 0, 19], [8, 0, 19], [14, 0, 19]]} /></Slot>
                <Slot $w={32}><Pressed><Lines rows={[[4, 0, 19], [10, 0, 19], [16, 0, 19]]} /></Pressed></Slot>
                <Slot $w={32}><Lines rows={[[8, 0, 19], [13, 0, 19], [18, 0, 19]]} /></Slot>
                <Slot $w={32}><OrientIcon /></Slot>
                <Slot $w={10}><Chev /></Slot>
              </ToolRow>
              <ToolRow>
                <Slot $w={32}><Lines rows={[[2, 0, 19], [7, 0, 13], [12, 0, 19], [17, 0, 13]]} /></Slot>
                <Slot $w={32}><Lines rows={[[2, 0, 19], [7, 3, 16], [12, 0, 19], [17, 3, 16]]} /></Slot>
                <Slot $w={32}><Lines rows={[[2, 0, 19], [7, 6, 19], [12, 0, 19], [17, 6, 19]]} /></Slot>
                <Slot $w={32}><IndentIcon out /></Slot>
                <Slot $w={31}><IndentIcon /></Slot>
              </ToolRow>
            </TwoRows>
            <InnerSep />
            <TwoRows>
              <ToolRow><Slot $w={46}><WrapIcon /></Slot></ToolRow>
              <ToolRow>
                <Slot $w={42}><MergeIcon /></Slot>
                <Slot $w={18}><Chev /></Slot>
              </ToolRow>
            </TwoRows>
          </GroupBody>
          <GroupLabel $launcher>配置</GroupLabel>
          <Launcher><LaunchIcon /></Launcher>
        </Group>

        <Group $w={200}>
          <GroupBody $pl={10.5}>
            <TwoRows>
              <ToolRow><SelectBox $w={180}>標準<Chev /></SelectBox></ToolRow>
              <ToolRow>
                <Slot $w={30}><AccountingIcon /></Slot>
                <Slot $w={17}><Chev /></Slot>
                <Slot $w={38}><PercentIcon /></Slot>
                <Slot $w={27}><CommaIcon /></Slot>
                <Slot $w={7}><ToolSep /></Slot>
                <Slot $w={26}><DecimalIcon more /></Slot>
                <Slot $w={38}><DecimalIcon /></Slot>
              </ToolRow>
            </TwoRows>
          </GroupBody>
          <GroupLabel $launcher>数値</GroupLabel>
          <Launcher><LaunchIcon /></Launcher>
        </Group>

        <Group $w={235}>
          <GroupBody $pl={3.5}>
            <BigButton $w={75}>
              <BigIcon><CondFormatIcon /></BigIcon>
              <BigLine $ls={-0.4}>条件付き</BigLine>
              <BigLine>書式<Chev /></BigLine>
            </BigButton>
            <BigButton $w={75}>
              <BigIcon $dx={3}><TableBrushIcon /></BigIcon>
              <BigLine $ls={-1.9}>テーブルとして</BigLine>
              <BigLine>書式設定<Chev /></BigLine>
            </BigButton>
            <BigButton $w={76}>
              <BigIcon $dx={5}><TableBrushIcon solid /></BigIcon>
              <BigLine $ls={-2.5}>セルの</BigLine>
              <BigLine $ls={-2.4}>スタイル<Chev /></BigLine>
            </BigButton>
          </GroupBody>
          <GroupLabel $ls={-2}>スタイル</GroupLabel>
        </Group>

        <Group $w={122}>
          <GroupBody $pl={10.4}>
            <ThreeRows>
              <SmallRow><Slot $w={30}><InsertIcon /></Slot>挿入<Slot $w={50}><Chev /></Slot></SmallRow>
              <SmallRow><Slot $w={30}><DeleteIcon /></Slot>削除<Slot $w={50}><Chev /></Slot></SmallRow>
              <SmallRow><Slot $w={30}><FormatIcon /></Slot>書式<Slot $w={17}><Chev /></Slot></SmallRow>
            </ThreeRows>
          </GroupBody>
          <GroupLabel $ls={-2}>セル</GroupLabel>
        </Group>

        <Group $w={209}>
          <GroupBody $pl={11.4}>
            <ThreeRows>
              <SmallRow><Slot $w={28}><SumIcon /></Slot><Slot $w={30}><Chev /></Slot></SmallRow>
              <SmallRow><Slot $w={28}><FillDownIcon /></Slot><Slot $w={13}><Chev /></Slot></SmallRow>
              <SmallRow><Slot $w={28}><EraserIcon /></Slot><Slot $w={13}><Chev /></Slot></SmallRow>
            </ThreeRows>
            <BigButton $w={78}>
              <BigIcon><SortIcon /></BigIcon>
              <BigLine $ls={-2}>並べ替えと</BigLine>
              <BigLine $ls={-3.5}>フィルター<Chev /></BigLine>
            </BigButton>
            <BigButton $w={50}>
              <BigIcon><FindIcon /></BigIcon>
              <BigLine $ls={-1.5}>検索と</BigLine>
              <BigLine>選択<Chev /></BigLine>
            </BigButton>
          </GroupBody>
          <GroupLabel>編集</GroupLabel>
        </Group>

        <Group $w={71.4}>
          <GroupBody>
            <BigButton $w={71}>
              <BigIcon><AddinIcon /></BigIcon>
              <BigLine $ls={-1}>アド</BigLine>
              <BigLine $ls={-1}>イン</BigLine>
            </BigButton>
          </GroupBody>
          <GroupLabel $ls={-2.5}>アドイン</GroupLabel>
        </Group>

        <Group $w={117.6}>
          <GroupBody>
            <BigButton $w={117}>
              <BigIcon><PdfLinkIcon /></BigIcon>
              <BigLine $ls={-0.4}>PDF を作成し</BigLine>
              <BigLine $ls={-2}>てリンクを共有</BigLine>
            </BigButton>
          </GroupBody>
          <GroupLabel $ls={0.2}>Adobe Acrobat</GroupLabel>
        </Group>

        <Group $w={85}>
          <GroupBody>
            <BigButton $w={84}>
              <BigIcon><FlaskIcon /></BigIcon>
              <BigLine>Excel</BigLine>
              <BigLine>Labs</BigLine>
            </BigButton>
          </GroupBody>
          <GroupLabel $ls={0.3}>Excel Labs</GroupLabel>
        </Group>

        <CollapseButton><Chev w={13} /></CollapseButton>
      </Ribbon>

      <FormulaBar>
        <FormulaCell $w={126}>
          <NameText>A1</NameText>
          <Slot $w={26}><Chev w={12} /></Slot>
        </FormulaCell>
        <DotsSlot><Dots /></DotsSlot>
        <FormulaCell $w={106}>
          <Slot $w={32}><CloseIcon c="#b0b0b0" s={15} /></Slot>
          <Slot $w={30}>
            <svg width="18" height="15" viewBox="0 0 18 15" fill="none" stroke="#b0b0b0" strokeWidth="1.3"><path d="M1 8 6 14 17 1" /></svg>
          </Slot>
          <Slot $w={32}><FxText>fx</FxText></Slot>
          <Slot $w={8}><Chev c="#999" w={12} /></Slot>
        </FormulaCell>
        <Slot $w={6} />
        <FormulaCell>
          <Slot $w={34} $ml={1605}><Chev w={12} /></Slot>
        </FormulaCell>
      </FormulaBar>

      <Main>
        <SheetPane>
          <GridArea>
            <Grid>
              <Row $h={29}>
                <Corner />
                {columns.map((c) => (
                  <ColHead key={c} $on={c === 'A'}>{c}</ColHead>
                ))}
              </Row>
              {rows.map((r) => (
                <Row key={r} $h={30}>
                  <RowHead $on={r === 1}>{r}</RowHead>
                  {columns.map((c) => (
                    <Cell key={c} />
                  ))}
                </Row>
              ))}
              <Selection />
            </Grid>
            <VScroll>
              <Tri d="u" />
              <VThumb />
              <Tri d="d" />
            </VScroll>
          </GridArea>
          <SheetBar>
            <NavSlots>
              <Slot $w={70}><Nav /></Slot>
              <Slot $w={10}><Nav right /></Slot>
              <Slot $w={60} />
            </NavSlots>
            <SheetTab>Sheet1</SheetTab>
            <TabDivider />
            <NavSlots><Slot $w={118}><Plus /></Slot></NavSlots>
            <HScroll>
              <Slot $w={16}><Dots /></Slot>
              <Slot $w={20} $ml={13}><Tri d="l" /></Slot>
              <HThumb />
              <Slot $w={26}><Tri d="r" /></Slot>
            </HScroll>
          </SheetBar>
        </SheetPane>

        <Panel>
          <PanelHead>
            <BurgerIcon />
            <ModeLabel>オート</ModeLabel>
            <Slot $w={36}><Chev c="#666" w={12} /></Slot>
            <NewChat><ComposeIcon /></NewChat>
            <Slot $w={36} $ml={18}><CloseIcon c="#444" s={18} /></Slot>
          </PanelHead>
          <ReasonLine>
            1 ステップで推論しました
            <svg width="8" height="14" viewBox="0 0 8 14" fill="none" stroke="#444" strokeWidth="1.4"><path d="M1 1 7 7 1 13" /></svg>
          </ReasonLine>
          <PlanBody>
            ブックに変更を加える前の計画は次のとおりで<br />す。
            <PlanList>
              <PlanItem>
                <PlanMark>•</PlanMark>
                <span><Latin>Sheet1</Latin>にテーブルのヘッダー行（案件<Latin>ID</Latin>、顧<br />客名、担当者、案件金額、受注確度、加重売<br />上、ステータス、最終更新日、経過日数、優<br />先度）を作成する</span>
              </PlanItem>
              <PlanItem>
                <PlanMark>•</PlanMark>
                <span>サンプルデータ<Latin>10</Latin>件（案件<Latin>ID</Latin>、顧客名、担当<br />者、案件金額、受注確度、ステータス、最終<br />更新日）を入力する</span>
              </PlanItem>
              <PlanItem>
                <PlanMark>•</PlanMark>
                <span>加重売上列に計算式（案件金額×受注確度）を<br />設定する</span>
              </PlanItem>
              <PlanItem>
                <PlanMark>•</PlanMark>
                <span>経過日数列に計算式（今日の日付−最終更新</span>
              </PlanItem>
            </PlanList>
          </PlanBody>
          <PlanChip>計画<Chev c="#555" w={11} /></PlanChip>
          <InputBox>
            <Placeholder>計画したい内容を説明します</Placeholder>
            <InputTools>
              <Plus s={22} c="#555" w={1.6} />
              <LinkIcon />
            </InputTools>
          </InputBox>
          <Disclaimer>AI 生成コンテンツは誤りを含む可能性があります。</Disclaimer>
        </Panel>
      </Main>

      <StatusBar>
        <StatusText $ml={13}>準備完了</StatusText>
        <Slot $w={19} $ml={27}><MacroIcon /></Slot>
        <Slot $w={17} $ml={21}><AccessIcon /></Slot>
        <StatusText $ml={4} $size={14} $ls={-0.9}>アクセシビリティ: 問題ありません</StatusText>
        <StatusRight>
          <ViewButton $on $w={51}><NormalViewIcon /></ViewButton>
          <ViewButton $w={51}><PageViewIcon /></ViewButton>
          <ViewButton $w={50}><BreakViewIcon /></ViewButton>
          <Slot $w={13} $ml={3.5}><svg width="9" height="2"><rect width="9" height="1.3" fill="#555" /></svg></Slot>
          <ZoomTrack><ZoomThumb /></ZoomTrack>
          <Plus s={10} c="#555" w={1.2} />
          <ZoomPct>100%</ZoomPct>
        </StatusRight>
      </StatusBar>

      <Mark $x={1343} $y={448}>
        <svg width="22" height="368" viewBox="0 0 22 368" fill="none" style={{ filter: 'drop-shadow(2px 2px 2px rgba(0,0,0,.3))' }}>
          <path d="M20 3H12Q6 3 6 9V178L3 183 6 188V358Q6 364 12 364H20" stroke="#f00" strokeWidth="5.5" />
        </svg>
      </Mark>
      <Mark $x={1276} $y={604}><CircledDigit>④</CircledDigit></Mark>
      <Mark $x={1841} $y={843}><CircledDigit>⑤</CircledDigit></Mark>
      <Mark $x={1859} $y={450}>
        <svg width="44" height="384" viewBox="0 0 44 384" style={{ filter: 'drop-shadow(2px 1px 2px rgba(0,0,0,.35))' }}>
          <path d="M22 1 30 342H40L22 382 4 342H15Z" fill="#f00" />
        </svg>
      </Mark>
    </Window>
  </>
);

export default App;
